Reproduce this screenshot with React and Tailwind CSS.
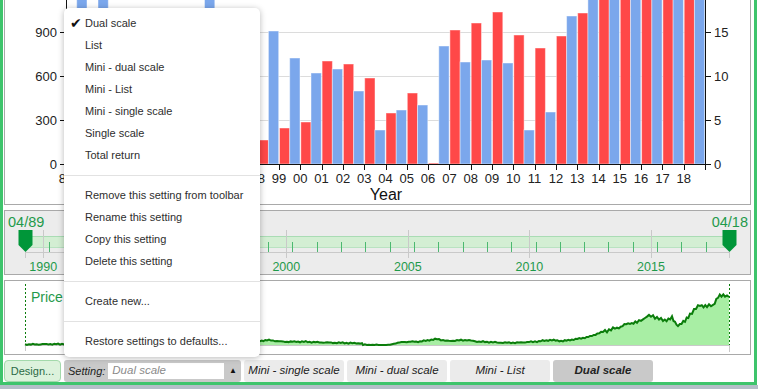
import React from 'react';

const BLUE = '#7ba7ec';
const RED = '#ff4848';
const GREEN_TXT = '#1f9a4b';

// bar tops in page pixels (0 baseline at y=164), index 0 = 1989
const blueTops = [null, -5, -5, 40, 90, 60, 30, -5, 50, 70, 31, 58, 73, 69, 91, 130, 110, 105, 46, 62, 60, 63, 130, 112, 16, -5, -5, -5, -5, -5, -5];
const redTops = [120, 100, 80, 110, 130, 90, 60, 40, 100, 140, 128, 122, 61, 64, 78, 113, 93, 163, 30, 23, 12, 35, 48, 36, 13, -5, -5, -5, -5, -5];
const yearLabels = Array.from({ length: 30 }, (_, i) => String((89 + i) % 100).padStart(2, '0'));
const tickX = (i) => 66 + i * 21.3;

const pricePts = [
  [25, 344.5], [64, 344], [120, 343], [180, 342], [230, 342], [260, 341], [267, 340], [283, 341.7], [300, 341.7],
  [333, 342.7], [362, 343.3], [363, 345], [390, 345], [392, 344], [403, 342], [420, 341.5], [437, 339], [447, 341],
  [467, 340], [477, 341.5], [503, 342.7], [517, 342.7], [537, 341.5], [550, 340], [563, 341], [570, 340], [583, 338],
  [590, 336.5], [603, 331.5], [617, 328], [630, 323], [637, 322.5], [647, 316.5], [653, 316], [663, 320.5], [672, 318],
  [675, 323], [678, 325], [685, 321.5], [690, 314], [700, 305], [707, 306.5], [713, 305], [718, 297], [725, 295], [729, 297],
];

function pricePath() {
  const out = [];
  for (let k = 0; k < pricePts.length - 1; k++) {
    const [x0, y0] = pricePts[k];
    const [x1, y1] = pricePts[k + 1];
    const steps = Math.max(1, Math.round((x1 - x0) / 2));
    for (let s = 0; s < steps; s++) {
      const t = s / steps;
      const x = x0 + (x1 - x0) * t;
      const amp = y0 < 335 ? 1.2 : 0.4;
      const n = Math.sin(x * 1.7) * amp + Math.sin(x * 0.53) * amp * 0.6;
      out.push([x, Math.min(345, y0 + (y1 - y0) * t + n)]);
    }
  }
  out.push(pricePts[pricePts.length - 1]);
  return out;
}

const MainChart = () => {
  const font = { fontFamily: '"Liberation Sans", Arial, sans-serif' };
  return (
    <svg width="745" height="204" viewBox="5 0 745 204" style={font}>
      {[32, 76, 120].map((y) => (
        <line key={y} x1="66" x2="705" y1={y + 0.5} y2={y + 0.5} stroke="#dcdcdc" />
      ))}
      {redTops.map((t, i) => (
        <rect key={'r' + i} x={tickX(i) + 0.5} y={t} width="10.3" height={164 - t} fill={RED} stroke="rgba(255,255,255,0.45)" />
      ))}
      {blueTops.map((t, i) =>
        t === null ? null : (
          <rect key={'b' + i} x={tickX(i) - 10.6} y={t} width="10.3" height={164 - t} fill={BLUE} stroke="rgba(255,255,255,0.45)" />
        )
      )}
      <line x1="66.5" x2="66.5" y1="0" y2="164" stroke="#111" />
      <line x1="705.5" x2="705.5" y1="0" y2="170" stroke="#111" />
      <line x1="66" x2="706" y1="164.5" y2="164.5" stroke="#111" />
      {[[32, '900', '15'], [76, '600', '10'], [120, '300', '5'], [164, '0', '0']].map(([y, l, r]) => (
        <g key={y}>
          <line x1="60" x2="66" y1={y + 0.5} y2={y + 0.5} stroke="#111" />
          <line x1="705" x2="711" y1={y + 0.5} y2={y + 0.5} stroke="#111" />
          <text x="57" y={y + 5} textAnchor="end" fontSize="13" fill="#222">{l}</text>
          <text x="714" y={y + 5} fontSize="13" fill="#222">{r}</text>
        </g>
      ))}
      {yearLabels.map((l, i) => (
        <g key={l}>
          <line x1={Math.round(tickX(i)) + 0.5} x2={Math.round(tickX(i)) + 0.5} y1="164" y2="170" stroke="#111" />
          <text x={tickX(i)} y="183" textAnchor="middle" fontSize="13" fill="#222">{l}</text>
        </g>
      ))}
      <text x="386" y="199.5" textAnchor="middle" fontSize="16" fill="#111">Year</text>
    </svg>
  );
};

const sx = (yr) => 25 + (yr - 1989.25) * 24.31;

const Thumb = ({ x }) => (
  <path d={`M${x - 7} 230 H${x + 7} V245 L${x} 252 L${x - 7} 245 Z`} fill="#009639" />
);

const RangeSlider = () => (
  <svg width="745" height="63" viewBox="5 211 745 63" style={{ fontFamily: '"Liberation Sans", Arial, sans-serif' }}>
    <rect x="25" y="236" width="705" height="12" fill="#d3eed3" />
    <line x1="25" x2="730" y1="236.5" y2="236.5" stroke="#a9dcb4" />
    <line x1="25" x2="730" y1="247.5" y2="247.5" stroke="#b9e2c1" />
    {[1990, 1995, 2000, 2005, 2010, 2015].map((y) => (
      <line key={y} x1={Math.round(sx(y)) + 0.5} x2={Math.round(sx(y)) + 0.5} y1="230" y2="258" stroke="#c9c9c9" />
    ))}
    <line x1="25" x2="730" y1="252.5" y2="252.5" stroke="#c9c9c9" />
    {Array.from({ length: 28 }, (_, n) => 25 + (n + 1) * 24.31).map((x) => (
      <line key={x} x1={Math.round(x) + 0.5} x2={Math.round(x) + 0.5} y1="242" y2="252" stroke="#4cb870" />
    ))}
    <line x1="25.5" x2="25.5" y1="252" y2="258" stroke="#c9c9c9" />
    <line x1="729.5" x2="729.5" y1="252" y2="258" stroke="#c9c9c9" />
    <Thumb x={25.5} />
    <Thumb x={729.5} />
    <text x="8" y="226.5" fontSize="14.5" fill={GREEN_TXT}>04/89</text>
    <text x="748" y="226.5" fontSize="14.5" fill={GREEN_TXT} textAnchor="end">04/18</text>
    {[1990, 2000, 2005, 2010, 2015].map((y) => (
      <text key={y} x={sx(y)} y="271" fontSize="12.5" fill={GREEN_TXT} textAnchor="middle">{y}</text>
    ))}
  </svg>
);

const MiniChart = () => {
  const pts = pricePath();
  const line = pts.map(([x, y], i) => `${i ? 'L' : 'M'}${x.toFixed(1)} ${y.toFixed(1)}`).join(' ');
  return (
    <svg width="745" height="73" viewBox="5 281 745 73" style={{ fontFamily: '"Liberation Sans", Arial, sans-serif' }}>
      <path d={`${line} L729 345 L25 345 Z`} fill="#a8eea4" />
      <line x1="25" x2="730" y1="345.5" y2="345.5" stroke="#c9c9c9" />
      <line x1="25.5" x2="25.5" y1="345" y2="351" stroke="#c9c9c9" />
      <line x1="729.5" x2="729.5" y1="345" y2="352" stroke="#c9c9c9" />
      <path d={line} fill="none" stroke="#0b7d0b" strokeWidth="2" />
      <line x1="25.5" x2="25.5" y1="284" y2="345" stroke="#0b7d0b" strokeDasharray="2 2" />
      <line x1="729.5" x2="729.5" y1="284" y2="345" stroke="#0b7d0b" strokeDasharray="2 2" />
      <text x="31" y="301.5" fontSize="14" fill={GREEN_TXT}>Price</text>
    </svg>
  );
};

const menuTop = ['Dual scale', 'List', 'Mini - dual scale', 'Mini - List', 'Mini - single scale', 'Single scale', 'Total return'];
const menuMid = ['Remove this setting from toolbar', 'Rename this setting', 'Copy this setting', 'Delete this setting'];

const Item = ({ children, checked }) => (
  <div className="relative h-[22px] flex items-center pl-[21px] text-[11px] text-[#2e2e2e]">
    {checked && (
      <span className="absolute left-[6px] top-0 h-full flex items-center text-[14px] leading-none text-[#111] font-['DejaVu_Sans',sans-serif]">
        ✔
      </span>
    )}
    {children}
  </div>
);

const Sep = () => (
  <div className="h-[18px] flex items-center">
    <div className="w-full h-px bg-[#e2e2e2]" />
  </div>
);

const SettingsMenu = () => (
  <div className="absolute left-[64px] top-[8px] w-[196px] h-[349px] bg-white rounded-[5px] shadow-[0_1px_6px_rgba(0,0,0,0.28)] pt-[4px] pb-[5px]">
    {menuTop.map((t, i) => (
      <Item key={t} checked={i === 0}>{t}</Item>
    ))}
    <Sep />
    {menuMid.map((t) => (
      <Item key={t}>{t}</Item>
    ))}
    <Sep />
    <Item>Create new...</Item>
    <Sep />
    <Item>Restore settings to defaults...</Item>
  </div>
);

const Toolbar = () => (
  <div className="h-[22px] flex gap-[3px] text-[11.5px]">
    <button className="w-[57px] h-full rounded-[4px] border border-[#a3d9ab] bg-[#dcf2dc] text-[#2b6a45] text-[11px]">
      Design...
    </button>
    <div className="w-[177px] h-full rounded-[3px] bg-[#c9c9c9] flex items-center pl-[4px] pr-[4px] gap-[3px]">
      <span className="italic text-[#222] text-[11px]">Setting:</span>
      <div className="w-[120px] h-[16px] bg-white flex items-center pl-[4px] italic text-[#8a8a8a]">Dual scale</div>
      <span className="text-[8px] text-[#111] ml-[2px]">▲</span>
    </div>
    <button className="w-[100px] h-full rounded-[3px] bg-[#ebebeb] italic text-[#222]">Mini - single scale</button>
    <button className="w-[100px] h-full rounded-[3px] bg-[#ebebeb] italic text-[#222]">Mini - dual scale</button>
    <button className="w-[100px] h-full rounded-[3px] bg-[#ebebeb] italic text-[#222]">Mini - List</button>
    <button className="w-[100px] h-full rounded-[3px] bg-[#c9c9c9] italic font-bold text-[#222]">Dual scale</button>
  </div>
);

export default function App() {
  return (
    <div className="relative w-[758px] h-[389px] bg-white overflow-hidden font-['Liberation_Sans',Arial,sans-serif]">
      <div className="w-[757px] h-[385px] border-l-[3px] border-r-[3px] border-b-[3px] border-[#3ec46c] pl-[1px] pr-[3px] flex flex-col gap-[5px]">
        <div className="h-[205px] border-x border-b border-[#a9a9a9] bg-white">
          <MainChart />
        </div>
        <div className="h-[65px] border border-[#a9a9a9] bg-[#ececec]">
          <RangeSlider />
        </div>
        <div className="h-[75px] border border-[#a9a9a9] bg-white">
          <MiniChart />
        </div>
        <Toolbar />
      </div>
      <div className="h-[4px] bg-[#b4bec8]" />
      <SettingsMenu />
    </div>
  );
}
